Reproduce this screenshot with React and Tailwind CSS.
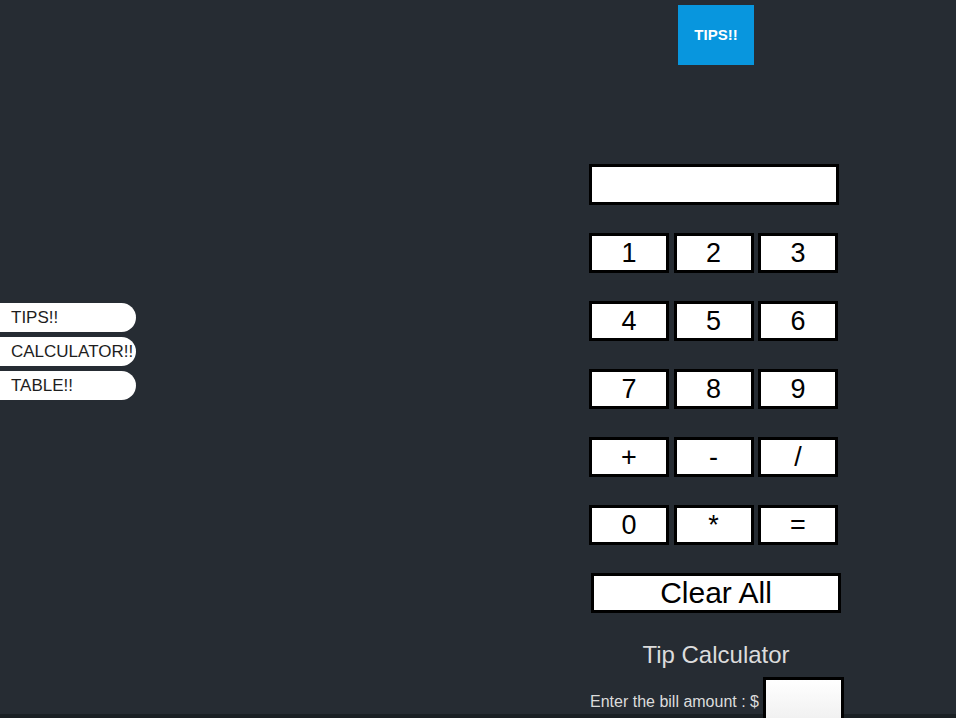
export default function App() {
  const rows = [
    ['1', '2', '3'],
    ['4', '5', '6'],
    ['7', '8', '9'],
    ['+', '-', '/'],
    ['0', '*', '='],
  ];

  return (
    <div className="min-h-[718px] h-[718px] overflow-hidden bg-[linear-gradient(to_bottom,#262c33_714px,#1a2024_714px)] font-['Liberation_Sans',Arial,sans-serif]">
      {/* top tab */}
      <div className="pt-[5px] pl-[678px]">
        <button className="w-[76px] h-[60px] bg-[#0896de] text-white text-[15px] font-bold">
          TIPS!!
        </button>
      </div>

      <div className="flex items-start">
        {/* side nav */}
        <nav className="mt-[238px] w-[136px] flex flex-col gap-[5px]">
          {['TIPS!!', 'CALCULATOR!!', 'TABLE!!'].map((label) => (
            <button
              key={label}
              className="h-[29px] bg-white rounded-r-full text-left pl-[11px] text-[17px] text-[#1e1e1e] whitespace-nowrap"
            >
              {label}
            </button>
          ))}
        </nav>

        {/* calculator */}
        <div className="ml-[453px] mt-[99px] w-[270px] flex flex-col">
          <input
            type="text"
            className="w-[250px] h-[41px] bg-white border-[3px] border-black outline-none"
          />
          <div className="mt-[28px] flex flex-col gap-[28px]">
            {rows.map((row, i) => (
              <div key={i} className="flex gap-[4.5px]">
                {row.map((k) => (
                  <button
                    key={k}
                    className="w-[80px] h-[40px] bg-white border-[3px] border-black text-[27px] leading-none text-black"
                  >
                    {k}
                  </button>
                ))}
              </div>
            ))}
          </div>
          <button className="mt-[28px] ml-[2px] w-[250px] h-[40px] bg-white border-[3px] border-black text-[30px] leading-none text-black">
            Clear All
          </button>

          <h2 className="mt-[28px] ml-[1px] w-[252px] text-center text-[24px] text-[#dcdcdc] leading-[28px]">
            Tip Calculator
          </h2>
          <div className="mt-[8px] ml-[1px] flex items-end gap-[4px] whitespace-nowrap">
            <span className="text-[16px] text-[#dcdcdc] mb-[7px]">Enter the bill amount : $</span>
            <input
              type="text"
              className="w-[81px] h-[44px] bg-[linear-gradient(to_bottom,#ffffff,#f1f1f1)] border-[3px] border-black outline-none shrink-0"
            />
          </div>
        </div>
      </div>
    </div>
  );
}
